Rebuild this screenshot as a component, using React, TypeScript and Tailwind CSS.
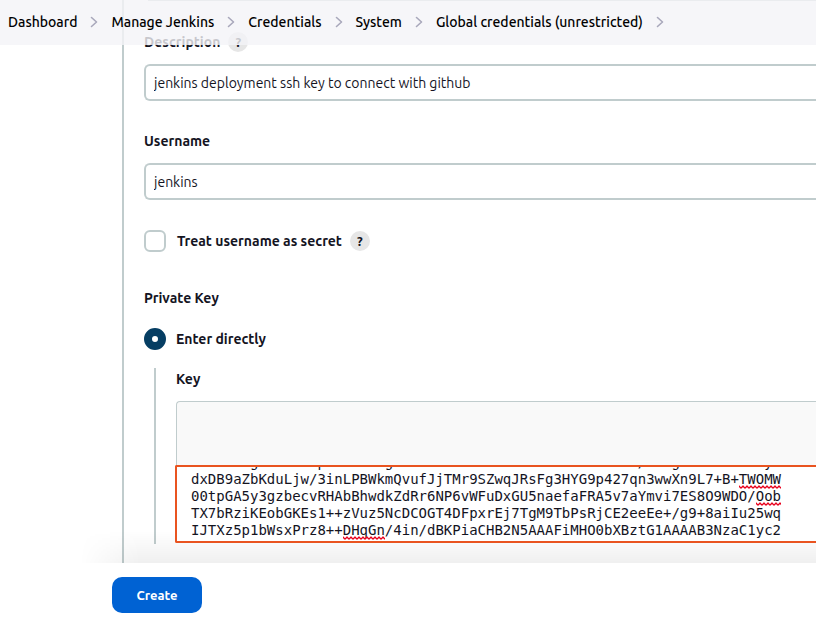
import { ChangeEvent, ReactNode, useState } from "react";

const crumbs = ["Dashboard", "Manage Jenkins", "Credentials", "System", "Global credentials (unrestricted)"];

const keyText = [
  "       g       p       g                             /   g          y",
  "dxDB9aZbKduLjw/3inLPBWkmQvufJjTMr9SZwqJRsFg3HYG9p427qn3wwXn9L7+B+TWOMW",
  "00tpGA5y3gzbecvRHAbBhwdkZdRr6NP6vWFuDxGU5naefaFRA5v7aYmvi7ES8O9WDO/Oob",
  "TX7bRziKEobGKEs1++zVuz5NcDCOGT4DFpxrEj7TgM9TbPsRjCE2eeEe+/g9+8aiIu25wq",
  "IJTXz5p1bWsxPrz8++DHqGn/4in/dBKPiaCHB2N5AAAFiMHO0bXBztG1AAAAB3NzaC1yc2",
].join("\n");

function Chevron() {
  return (
    <svg className="mx-[11px] h-3 w-3 shrink-0" viewBox="0 0 12 12" fill="none" aria-hidden="true">
      <path d="M3.5 1.5 8.5 6l-5 4.5" stroke="#a9a8bb" strokeWidth="1.6" strokeLinecap="round" strokeLinejoin="round" />
    </svg>
  );
}

function Help({ topic }: { topic: string }) {
  return (
    <button
      type="button"
      aria-label={"Help for " + topic}
      className="flex h-5 w-5 items-center justify-center rounded-full bg-[#e6e6e6] text-[13px] font-semibold leading-5"
    >
      ?
    </button>
  );
}

function TextField({ id, label, initial, help }: { id: string; label: string; initial: string; help?: ReactNode }) {
  const [value, setValue] = useState(initial);
  return (
    <div>
      <div className="flex h-5 items-center gap-2">
        <label htmlFor={id} className="font-semibold">
          {label}
        </label>
        {help}
      </div>
      <input
        id={id}
        type="text"
        value={value}
        onChange={(e: ChangeEvent<HTMLInputElement>) => setValue(e.target.value)}
        className="mt-3 block h-[37px] w-full rounded-l-md border-2 border-r-0 border-[#c0cccd] bg-white px-2 outline-none"
      />
    </div>
  );
}

function Squiggle({ className }: { className: string }) {
  return (
    <svg className={"pointer-events-none absolute h-1 " + className} aria-hidden="true">
      <defs>
        <pattern id="wave" width="4" height="4" patternUnits="userSpaceOnUse">
          <path d="M-1 0.5 0 1l1.5 1.7h1L4 1l1-.5" fill="none" stroke="#e8001c" strokeWidth="1.4" />
        </pattern>
      </defs>
      <rect width="100%" height="4" fill="url(#wave)" />
    </svg>
  );
}

export default function App() {
  const [key, setKey] = useState(keyText);
  return (
    <div className="flex min-h-screen flex-col overflow-x-hidden bg-white font-['Ubuntu','Noto_Sans',sans-serif] text-sm text-[#14141f]">
      <header className="sticky top-0 z-10 -mb-[45px] h-[45px] bg-[#f4f4f7]/80">
        <nav aria-label="Breadcrumb" className="h-full px-2 pb-px">
          <ol className="flex h-full items-center whitespace-nowrap text-sm font-medium text-black">
            {crumbs.map((c) => (
              <li key={c} className="flex items-center">
                <a href="#">{c}</a>
                <Chevron />
              </li>
            ))}
          </ol>
        </nav>
      </header>

      <main className="flex grow">
        <form id="credentials" className="ml-[122px] flex grow flex-col border-l-2 border-[#c0cccd] pb-[19px] pl-5">
          <div className="ml-1 h-px bg-[#c0cccd]" />
          <div className="mt-[31px]">
            <TextField
              id="description"
              label="Description"
              initial="jenkins deployment ssh key to connect with github"
              help={<Help topic="Description" />}
            />
          </div>
          <div className="mt-[30px]">
            <TextField id="username" label="Username" initial="jenkins" />
          </div>

          <div className="mt-[30px] flex h-[22px] items-center">
            <input
              id="secret"
              type="checkbox"
              className="h-[22px] w-[22px] appearance-none rounded-md border-2 border-[#c0cccd] bg-white checked:bg-[#063e63]"
            />
            <label htmlFor="secret" className="mr-2 ml-[11px] font-semibold">
              Treat username as secret
            </label>
            <Help topic="Treat username as secret" />
          </div>

          <fieldset className="mt-9">
            <legend className="h-5 font-semibold leading-5">Private Key</legend>
            <div className="mt-5 flex h-[22px] items-center">
              <input
                id="direct"
                name="source"
                type="radio"
                defaultChecked
                className="h-[22px] w-[22px] appearance-none rounded-full border-8 border-[#063e63] bg-white"
              />
              <label htmlFor="direct" className="ml-[10px] font-semibold">
                Enter directly
              </label>
            </div>
            <div className="mt-[18px] ml-[10px] border-l-2 border-[#c0cccd] pb-px pl-5">
              <label htmlFor="key" className="block h-[33px] font-semibold leading-[22px]">
                Key
              </label>
              <div className="rounded-tl-sm border-t border-l border-[#c0cccd] bg-[#f9f9f9] pt-[63px]">
                <div className="relative z-10 -ml-0.5 flex h-[78px] flex-col justify-end overflow-hidden rounded-l-xs border-2 border-r-0 border-[#e95420] bg-white pb-0.5">
                  <textarea
                    id="key"
                    rows={5}
                    value={key}
                    onChange={(e: ChangeEvent<HTMLTextAreaElement>) => setKey(e.target.value)}
                    className="block w-full shrink-0 resize-none overflow-hidden whitespace-pre pl-[14px] font-['DejaVu_Sans_Mono',monospace] text-sm leading-[17px] outline-none"
                  />
                  <Squiggle className="top-[18px] left-[562px] w-[42px]" />
                  <Squiggle className="top-[35px] left-[579px] w-[25px]" />
                  <Squiggle className="top-[69px] left-[166px] w-[42px]" />
                </div>
              </div>
            </div>
          </fieldset>
        </form>
      </main>

      <footer className="sticky bottom-0 flex h-[60px] items-center bg-white pl-28">
        <div className="pointer-events-none absolute right-0 bottom-full left-20 h-8 bg-linear-to-b from-transparent to-black/6 mask-[linear-gradient(to_right,transparent,black_60px)]" />
        <button
          type="submit"
          form="credentials"
          className="mb-[-4px] h-9 w-[90px] rounded-[10px] bg-[#0062d3] text-[13px] font-bold text-white"
        >
          Create
        </button>
      </footer>
    </div>
  );
}
